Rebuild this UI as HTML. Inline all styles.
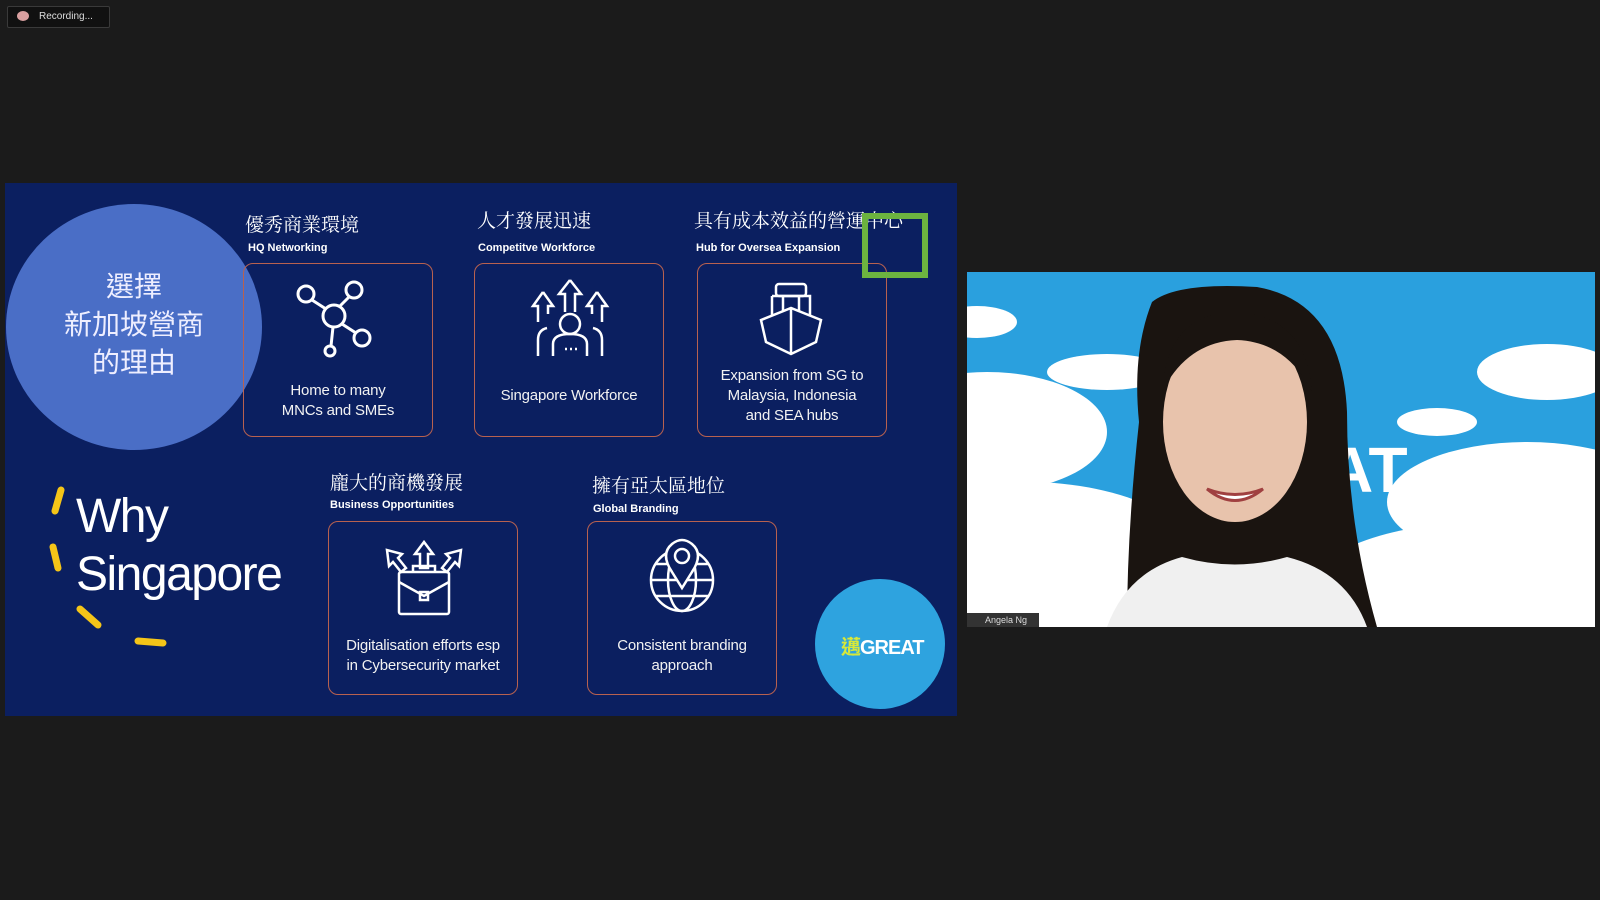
<!DOCTYPE html>
<html><head><meta charset="utf-8"><style>
*{margin:0;padding:0;box-sizing:border-box}
body{width:1600px;height:900px;background:#1b1b1b;position:relative;overflow:hidden;font-family:"Liberation Sans","Noto Sans CJK TC",sans-serif;color:#fff}
.abs{position:absolute}
#slide{left:5px;top:183px;width:952px;height:533px;background:#0b1f60}
.box{position:absolute;border:1.5px solid #b8614f;border-radius:10px;width:190px;height:174px}
.cap{position:absolute;left:0;right:0;text-align:center;font-size:15px;line-height:20px;color:#f2f2f2;font-family:"Liberation Sans Narrow","Liberation Sans",sans-serif;letter-spacing:-0.2px}
.zh{position:absolute;font-family:"Noto Serif CJK SC","Noto Sans CJK TC",serif;font-size:19px;white-space:nowrap}
.sub{position:absolute;font-size:11px;font-weight:bold;white-space:nowrap;font-family:"Liberation Sans Narrow","Liberation Sans",sans-serif}
svg{position:absolute}
</style></head><body>
<div class="abs" style="left:7px;top:6px;width:103px;height:22px;background:#111;border:1px solid #3a3a3a;border-radius:2px;font-size:10px;line-height:20px;padding-left:31px;color:#ddd">Recording...</div>
<div class="abs" style="left:17px;top:11px;width:12px;height:10px;border-radius:50%;background:#d9a0a0"></div>

<div id="slide" class="abs">
 <div class="abs" style="left:1px;top:21px;width:256px;height:246px;border-radius:50%;background:#4a6ec6"></div>
 <div class="abs" style="left:24px;top:83px;width:210px;text-align:center;font-family:'Noto Sans CJK TC',sans-serif;font-size:28px;line-height:38px;color:#eef">選擇<br>新加坡營商<br>的理由</div>

 <div class="zh" style="left:240px;top:27px">優秀商業環境</div>
 <div class="sub" style="left:243px;top:59px">HQ Networking</div>
 <div class="zh" style="left:472px;top:23px">人才發展迅速</div>
 <div class="sub" style="left:473px;top:59px">Competitve Workforce</div>
 <div class="zh" style="left:689px;top:23px">具有成本效益的營運中心</div>
 <div class="sub" style="left:691px;top:59px">Hub for Oversea Expansion</div>

 <div class="box" style="left:238px;top:80px">
  <svg width="190" height="174" viewBox="0 0 190 174" fill="none" stroke="#fff" stroke-width="3">
   <circle cx="62" cy="30" r="8"/><circle cx="110" cy="26" r="8"/><circle cx="90" cy="52" r="11"/><circle cx="118" cy="74" r="8"/><circle cx="86" cy="87" r="5"/>
   <path d="M68 36 L82 45 M105 33 L96 42 M98 60 L112 69 M89 63 L87 82"/>
  </svg>
  <div class="cap" style="top:117px">Home to many<br>MNCs and SMEs</div>
 </div>
 <div class="box" style="left:469px;top:80px">
  <svg width="190" height="174" viewBox="0 0 190 174" fill="none" stroke="#fff" stroke-width="2.5">
   <path d="M95 16 L84 30 H90 V48 M95 16 L106 30 H100 V48"/>
   <path d="M68 28 L58 42 H63 V58 M68 28 L78 42 H73 V50"/>
   <path d="M122 28 L112 42 H117 V50 M122 28 L132 42 H127 V58"/>
   <circle cx="95" cy="60" r="10"/>
   <path d="M78 92 V80 Q78 70 95 70 Q112 70 112 80 V92 M63 92 V76 Q63 66 72 64 M127 92 V76 Q127 66 118 64"/>
   <path d="M90 85 h2 M95 85 h2 M100 85 h2"/>
  </svg>
  <div class="cap" style="top:122px">Singapore Workforce</div>
 </div>
 <div class="box" style="left:692px;top:80px">
  <svg width="190" height="174" viewBox="0 0 190 174" fill="none" stroke="#fff" stroke-width="2.5">
   <rect x="78" y="20" width="30" height="12" rx="3"/>
   <path d="M74 32 H112 V52 M74 32 V52 M85 32 V48 M101 32 V48"/>
   <path d="M63 56 L93 44 L123 56 L118 78 L93 90 L68 78 Z M93 44 V90"/>
  </svg>
  <div class="cap" style="top:102px">Expansion from SG to<br>Malaysia, Indonesia<br>and SEA hubs</div>
 </div>

 <div class="abs" style="left:857px;top:30px;width:66px;height:65px;border:6px solid #6cb33f"></div>

 <div class="zh" style="left:325px;top:285px">龐大的商機發展</div>
 <div class="sub" style="left:325px;top:316px">Business Opportunities</div>
 <div class="zh" style="left:587px;top:288px">擁有亞太區地位</div>
 <div class="sub" style="left:588px;top:320px">Global Branding</div>

 <div class="box" style="left:323px;top:338px">
  <svg width="190" height="174" viewBox="0 0 190 174" fill="none" stroke="#fff" stroke-width="2.5">
   <rect x="70" y="50" width="50" height="42" rx="2"/>
   <path d="M70 60 L95 74 L120 60 M84 50 V44 H106 V50 M91 70 h8 v8 h-8z"/>
   <path d="M95 20 L86 32 H91 V46 H99 V32 H104 Z"/>
   <path d="M58 28 L60 44 L64 40 L72 50 L77 46 L69 36 L73 32 Z"/>
   <path d="M132 28 L130 44 L126 40 L118 50 L113 46 L121 36 L117 32 Z"/>
  </svg>
  <div class="cap" style="top:114px">Digitalisation efforts esp<br>in Cybersecurity market</div>
 </div>
 <div class="box" style="left:582px;top:338px">
  <svg width="190" height="174" viewBox="0 0 190 174" fill="none" stroke="#fff" stroke-width="2.5">
   <circle cx="94" cy="58" r="31"/>
   <ellipse cx="94" cy="58" rx="14" ry="31"/>
   <path d="M63 58 H125 M68 42 H120 M68 74 H120"/>
   <path d="M84 50 Q72 32 84 22 Q94 14 104 22 Q116 32 104 50 L94 66 Z" fill="#0b1f60"/>
   <circle cx="94" cy="34" r="7"/>
  </svg>
  <div class="cap" style="top:114px">Consistent branding<br>approach</div>
 </div>

 <div class="abs" style="left:71px;top:305px;font-size:48px;line-height:58px;font-family:'Liberation Sans',sans-serif;letter-spacing:-1.5px">Why<br>Singapore</div>
 <svg width="180" height="200" style="left:30px;top:300px" fill="none" stroke="#f5c518" stroke-width="7" stroke-linecap="round">
  <path d="M26 7 L20 28"/><path d="M18 64 L23 85"/><path d="M45 126 L63 142"/><path d="M103 158 L128 160"/>
 </svg>

 <div class="abs" style="left:810px;top:396px;width:130px;height:130px;border-radius:50%;background:#2ea3df"></div>
 <div class="abs" style="left:836px;top:448px;font-size:20px;font-weight:bold;letter-spacing:-1px"><span style="color:#d7e83a;font-family:'Noto Sans CJK TC',sans-serif">邁</span>GREAT</div>
</div>

<div class="abs" style="left:967px;top:272px;width:628px;height:355px;background:#2aa0de;overflow:hidden">
 <svg width="628" height="355" style="left:0;top:0">
  <g fill="#fff">
   <ellipse cx="20" cy="160" rx="120" ry="60"/><ellipse cx="60" cy="300" rx="180" ry="90"/><ellipse cx="140" cy="100" rx="60" ry="18"/>
   <ellipse cx="580" cy="100" rx="70" ry="28"/><ellipse cx="560" cy="230" rx="140" ry="60"/><ellipse cx="520" cy="320" rx="180" ry="70"/>
   <ellipse cx="470" cy="150" rx="40" ry="14"/><ellipse cx="10" cy="50" rx="40" ry="16"/>
  </g>
  <text x="360" y="220" font-family="Liberation Sans" font-weight="bold" font-size="64" fill="#fff">AT</text>
  <path d="M185 30 Q165 80 172 150 Q160 260 160 355 H410 Q380 250 380 140 Q375 30 290 15 Q210 10 185 30Z" fill="#1a1410"/>
  <ellipse cx="268" cy="150" rx="72" ry="100" fill="#e8c3ac"/>
  <path d="M195 120 Q200 40 270 40 Q340 45 345 120 Q320 70 270 68 Q220 70 195 120Z" fill="#1a1410"/>
  <path d="M140 355 Q160 300 215 285 Q268 300 320 285 Q380 300 400 355Z" fill="#f0f0f0"/>
  <path d="M240 217 Q268 240 296 217 Q268 228 240 217Z" fill="#fff" stroke="#a04040" stroke-width="3"/>
 </svg>
 <div class="abs" style="left:0;bottom:0;width:72px;height:14px;background:#333;font-size:9px;line-height:14px;padding-left:18px;color:#ddd">Angela Ng</div>
</div>
</body></html>
